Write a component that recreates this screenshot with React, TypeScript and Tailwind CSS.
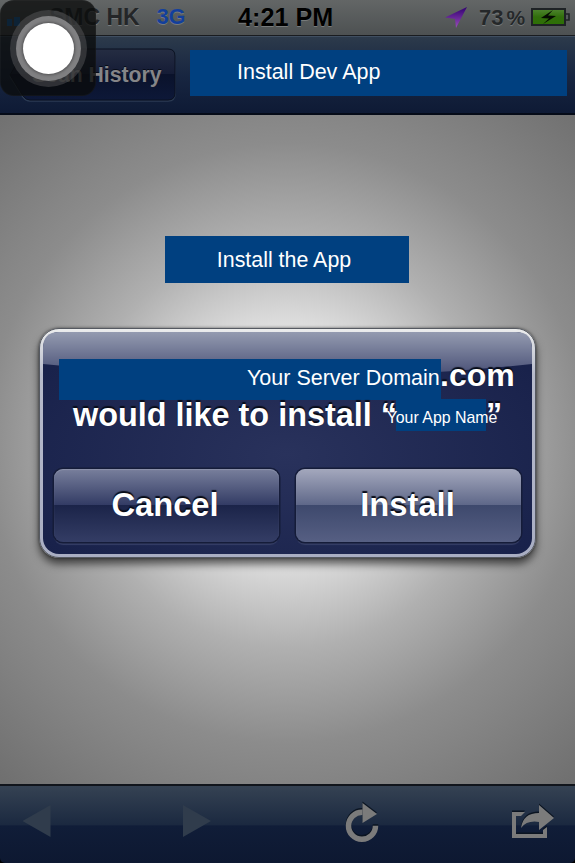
import React from "react";

function StatusBar() {
  return (
    <header className="flex h-[36px] shrink-0 items-center border-b border-[#191c20] bg-linear-to-b from-[#636666] to-[#4d5152] font-bold leading-none whitespace-nowrap [text-shadow:0_1px_0_#777b7c]">
      <div className="flex w-[238px] items-center">
        <div className="ml-[7px] flex h-[16px] w-[42px] items-end gap-[2px]">
          <i className="h-[7px] w-[5px] bg-[#1a78cf]" />
          <i className="h-[9px] w-[6px] bg-[#1a78cf]" />
        </div>
        <span className="text-[23px] text-[#242628]">SMC HK</span>
        <span className="ml-[17px] text-[21.5px] text-[#123f9c]">3G</span>
      </div>
      <span className="w-[207px] text-[25.2px] text-black">4:21 PM</span>
      <svg width="23" height="23" viewBox="0 0 23 23">
        <defs>
          <linearGradient id="loc" x1="0" y1="0" x2="0" y2="1">
            <stop stopColor="#310071" />
            <stop offset="1" stopColor="#9b4dbb" />
          </linearGradient>
        </defs>
        <path d="M22 1 11 22 10 13 0 11.5Z" fill="url(#loc)" />
      </svg>
      <span className="ml-[11px] text-[22px] text-[#25282a]">73</span>
      <span className="ml-[3px] text-[21px] font-bold text-[#25282a]">%</span>
      <svg className="ml-[6px]" width="39" height="20" viewBox="0 0 39 20">
        <defs>
          <linearGradient id="battery" x1="0" y1="0" x2="0" y2="1">
            <stop stopColor="#4f8530" />
            <stop offset=".5" stopColor="#316e0c" />
            <stop offset="1" stopColor="#2d7005" />
          </linearGradient>
        </defs>
        <rect x="1" y="1" width="33" height="16" fill="url(#battery)" stroke="#1e2225" strokeWidth="2" />
        <path d="M35 6h3v6h-3" fill="#555a5c" stroke="#1e2225" strokeWidth="1.6" />
        <path d="m22 2-12 8 8 .5-6 5.5 13-8-8-.5Z" fill="#050c02" />
      </svg>
    </header>
  );
}

function NavBar() {
  return (
    <nav className="flex h-[79px] shrink-0 items-start border-t border-b-2 border-t-[#3f4e60] border-b-[#050b18] bg-linear-to-b from-[#2c3a4b] via-[#182641] via-50% to-[#0e1a35]">
      <div className="mt-[11px] ml-[8px] grid h-[55px] w-[182px] shrink-0">
        <svg className="col-start-1 row-start-1" width="170" height="55" viewBox="0 0 170 55">
          <defs>
            <linearGradient id="back" x1="0" y1="0" x2="0" y2="1">
              <stop stopColor="#252d42" />
              <stop offset=".48" stopColor="#151c36" />
              <stop offset=".5" stopColor="#0a122b" />
              <stop offset="1" stopColor="#0d1838" />
            </linearGradient>
          </defs>
          <path d="M22 2H160Q167 2 167 9V46Q167 53 160 53H22Q18 53 15 49L2 28 15 6Q18 2 22 2Z" fill="none" stroke="#2b3a53" strokeWidth="1.5" />
          <path d="M22 1H160Q167 1 167 8V45Q167 52 160 52H22Q18 52 15 48L2 27 15 5Q18 1 22 1Z" fill="url(#back)" stroke="#0a1120" />
        </svg>
        <span className="col-start-1 row-start-1 mt-[16px] ml-[24px] text-[21.2px] leading-none font-bold whitespace-nowrap text-[#858588] [text-shadow:0_-1px_0_#070c18]">Scan History</span>
      </div>
      <div className="mt-[13px] h-[46px] w-[377px] bg-[#004080] pt-[12px] pl-[47px] text-[21.5px] leading-none text-white">Install Dev App</div>
    </nav>
  );
}

function AlertButton({ label, primary = false }: { label: string; primary?: boolean }) {
  return (
    <button
      className={`h-[73px] w-[225px] rounded-[9px] text-[32.7px] leading-none font-bold text-white ring-[1.5px] ring-[#151c39] shadow-[inset_0_1px_1px_#a1a7bc80,0_3px_1px_#363f66] [text-shadow:0_-2px_1px_#080c18] ${
        primary
          ? "bg-[linear-gradient(#a4a8bd,#5f6889_49%,#3e496d_50%,#565f83)] pr-[2px]"
          : "bg-[linear-gradient(#787f9c,#333c65_49%,#1b2449_50%,#343d65)] pr-[3px]"
      }`}
    >
      {label}
    </button>
  );
}

function InstallAlert() {
  return (
    <section
      role="dialog"
      className="mt-[45px] flex h-[230px] w-[497px] flex-col rounded-[20px] border border-[#555961] bg-linear-to-b from-[#eceded] via-[#b7bbcb] via-20% to-[#a9aec3] p-[3px] shadow-[0_6px_8px_#0009,0_0_3px_#0008]"
    >
      <div className="grid h-full w-full rounded-[16px] bg-[radial-gradient(ellipse_at_50%_55%,#29325c,#18214a_90%)]">
        <svg className="col-start-1 row-start-1" width="489" height="46" viewBox="0 0 489 46">
          <defs>
            <linearGradient id="gloss" x1="0" y1="0" x2="0" y2="1">
              <stop stopColor="#949bb0" />
              <stop offset="1" stopColor="#454c73" />
            </linearGradient>
          </defs>
          <path d="M0 16Q0 0 16 0H473Q489 0 489 16V32Q245 58 0 32Z" fill="url(#gloss)" />
        </svg>
        <div className="col-start-1 row-start-1 flex flex-col pt-[27px] text-[32.4px] leading-none font-bold whitespace-nowrap text-white [text-shadow:0_-2px_1px_#080c18]">
          <div className="ml-[16px] flex h-[40px]">
            <span className="h-[41px] w-[382px] shrink-0 bg-[#004080] pt-[9px] pl-[188px] text-[21.5px] leading-none font-normal [text-shadow:none]">Your Server Domain</span>
            <span className="-ml-px text-[32px]">.com</span>
          </div>
          <div className="ml-[30px] flex h-[70px]">
            <span className="w-[323px] shrink-0">would like to install “</span>
            <span className="z-10 flex h-[32px] w-[90px] shrink-0 justify-center bg-[#004080] pt-[11px] pl-[2px] text-[15.9px] leading-none font-normal [text-shadow:none]">Your App Name</span>
            <span>”</span>
          </div>
          <div className="ml-[11px] flex gap-[17px]">
            <AlertButton label="Cancel" />
            <AlertButton label="Install" primary />
          </div>
        </div>
      </div>
    </section>
  );
}

function Toolbar() {
  return (
    <div className="shrink-0 bg-black">
      <footer className="flex h-[79px] items-start rounded-b-[5px] border-t-2 border-[#11151c] bg-[linear-gradient(#354253,#1b2940_50%,#101d38_52%,#0d1831)] pt-[16px]">
        <svg className="ml-[22px]" width="29" height="38" viewBox="0 0 29 38">
          <path d="M28.5 3V35L.5 19Z" fill="#303c4c" />
        </svg>
        <svg className="ml-[132px]" width="29" height="38" viewBox="0 0 29 38">
          <path d="M0 3V35L28 19Z" fill="#303c4c" />
        </svg>
        <svg className="ml-[133px] overflow-visible" width="36" height="42" viewBox="0 0 36 42">
          <g transform="translate(0 -1.5)" >
            <path d="M17.5 10.3A13.5 13.5 0 1 0 30.5 23.8" fill="none" stroke="#0b1421" strokeWidth="5.5" />
            <path d="M17.5 1V21L32 12Z" fill="#0b1421" />
          </g>
          <path d="M17.5 10.3A13.5 13.5 0 1 0 30.5 23.8" fill="none" stroke="#7b7b7b" strokeWidth="5.5" />
          <path d="M17.5 1V21L32 12Z" fill="#7b7b7b" />
        </svg>
        <svg className="ml-[131px] overflow-visible" width="42" height="38" viewBox="0 0 42 38">
          <g transform="translate(0 -1.5)" fill="#0b1421">
            <path d="M0 10H13L9 14H4V32H31V28L35 25V36H0Z" />
            <path d="M27 3 42 16 27 28V20Q15 18 9 26Q11 11 27 11Z" />
          </g>
          <path d="M0 10H13L9 14H4V32H31V28L35 25V36H0Z" fill="#7b7b7b" />
          <path d="M27 3 42 16 27 28V20Q15 18 9 26Q11 11 27 11Z" fill="#7b7b7b" />
        </svg>
      </footer>
    </div>
  );
}

function AssistiveTouch() {
  return (
    <div className="absolute top-0 left-0 flex size-[96px] items-center justify-center rounded-[14px] border border-[#ffffff08] bg-[#0a0b0bc8]">
      <div className="flex size-[77px] items-center justify-center rounded-full bg-[#66666866]">
        <div className="flex size-[65px] items-center justify-center rounded-full bg-[#808082]">
          <div className="size-[51px] rounded-full bg-white shadow-[0_0_3px_1px_#505052]" />
        </div>
      </div>
    </div>
  );
}

export default function App() {
  return (
    <div className="relative flex h-[863px] w-[575px] flex-col overflow-hidden bg-[#727272] font-['Liberation_Sans',Arial,sans-serif]">
      <StatusBar />
      <NavBar />
      <main className="flex min-h-0 flex-1 flex-col items-center bg-[radial-gradient(circle_at_287px_328px,#f3f3f3_0px,#dddddd_120px,#b0b0b0_205px,#8c8c8c_300px,#707070_440px)] pt-[121px]">
        <div className="mr-[2px] h-[47px] w-[244px] bg-[#004080] pt-[14px] pr-[5px] text-center text-[21.4px] leading-none text-white">Install the App</div>
        <InstallAlert />
      </main>
      <Toolbar />
      <AssistiveTouch />
    </div>
  );
}
